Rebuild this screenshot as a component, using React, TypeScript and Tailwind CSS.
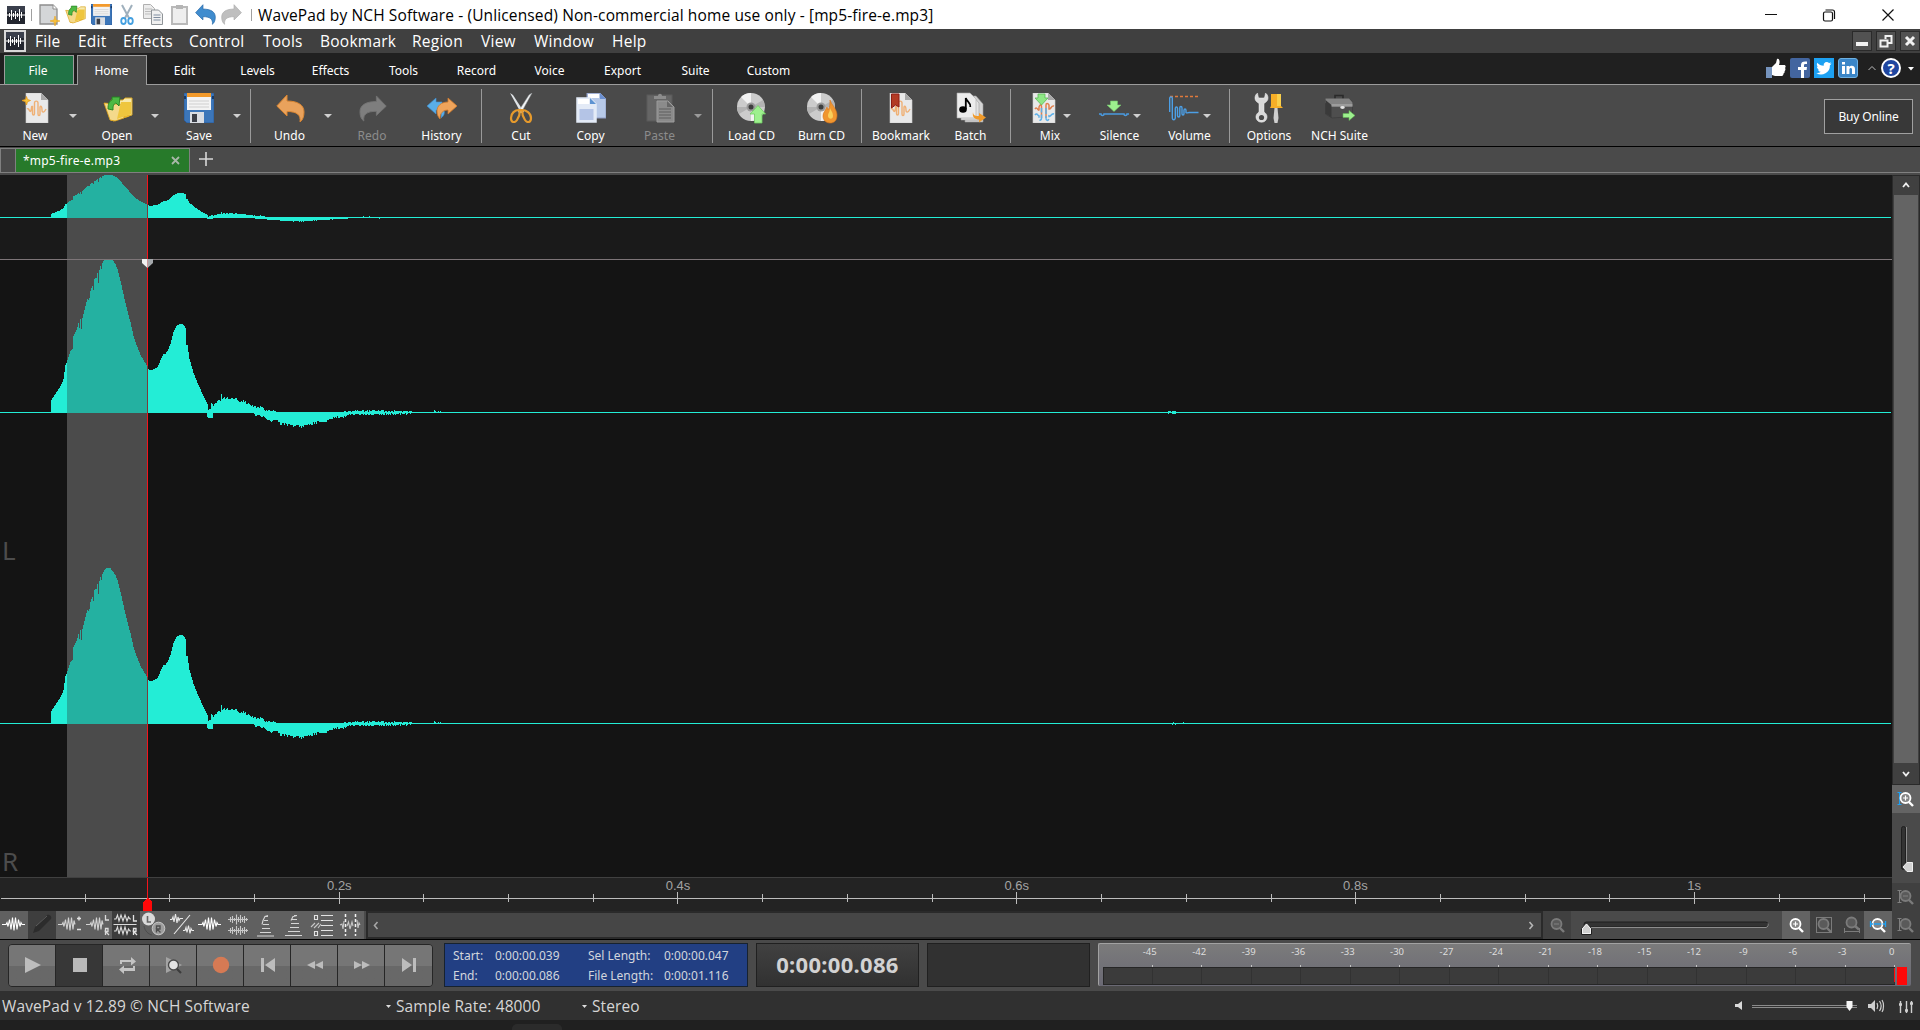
import React from "react";

/* ---------- waveform ---------- */

type Pt = [number, number];

const UPPER: Pt[] = [
  [51, 12], [55, 18], [60, 25.5], [63, 32.5], [64, 40], [65, 47], [66, 48.5], [67, 51.5], [70, 60.5], [72, 63], [73, 76],
  [76, 81.5], [78, 89], [79, 84], [80, 93], [81, 83], [82, 94], [85, 106], [87, 113], [88, 112], [89, 114], [90, 121], [92, 126],
  [93, 122], [94, 133], [96, 134], [97, 139], [98, 129], [99, 142], [100, 146], [101, 143], [102, 149], [104, 153],
  [106, 154.5], [110, 154.5], [112, 152], [115, 147.5], [117, 143], [120, 131], [123, 117.5], [126, 105], [130, 89.5],
  [133, 76], [136, 67], [140, 57], [144, 50], [147, 46], [148, 43], [149, 41.5], [152, 42], [157, 45], [160, 51.5],
  [163, 58], [165, 58], [167, 61], [170, 68], [173, 79.5], [176, 86], [179, 88], [182, 88], [184, 86],
  [185, 84], [186, 67], [187, 67], [189, 53], [193, 39], [198, 27], [203, 16], [207, 8], [208, 2], [210, 3], [211, 9],
  [213, 6], [218, 11], [222, 14], [230, 14], [238, 12], [243, 11], [248, 8], [253, 5], [262, 5], [264, 2], [274, 1.4], [276, 0], [340, 0],
  [352, 1.2], [380, 1.2], [411, 0.6], [412, 0], [433, 0], [434, 1], [440, 0.4], [445, 0],
];
const LOWER: Pt[] = [
  [206, 0], [207, 4], [209, 5], [212, 5], [213, 0], [253, 0], [254, 2], [262, 3], [268, 7], [278, 8], [280, 11],
  [290, 12], [300, 13.5], [307, 13], [313, 10], [325, 8.5], [331, 5], [344, 4], [349, 1.5], [410, 1], [411, 0], [445, 0],
];

const at = (pts: Pt[], x: number) => {
  if (x < pts[0][0] || x > pts[pts.length - 1][0]) return 0;
  for (let i = 1; i < pts.length; i++) {
    if (x <= pts[i][0]) {
      const [x0, y0] = pts[i - 1];
      const [x1, y1] = pts[i];
      return y0 + ((y1 - y0) * (x - x0)) / (x1 - x0 || 1);
    }
  }
  return 0;
};
const noise = (x: number) => {
  const s = Math.sin(x * 127.1) * 43758.5453;
  return s - Math.floor(s);
};

function wavePath(from: number, to: number, mid: number, scale: number, limit: number) {
  let d = "";
  for (let x = from; x < to; x++) {
    let u = at(UPPER, x);
    let l = at(LOWER, x);
    if (x > 212) {
      if (u > 0.3) u += (noise(x) - 0.5) * (u > 4 ? 3 : 1.6);
      if (l > 0.3) l += (noise(x + 900) - 0.5) * (l > 4 ? 3 : 1.6);
      if (x === 221) u += 4;
    }
    const trim = scale < 1 ? 0.1 : 0;
    const up = Math.max(0, Math.min(limit, Math.round(u * scale - trim)));
    const dn = Math.max(0, Math.round(l * scale - trim));
    if (up + dn > 0) d += `M${x} ${mid - up}h1v${up + dn + 1}h-1z`;
  }
  return d;
}

const Wave = ({ h, mid, scale, limit, blips }: { h: number; mid: number; scale: number; limit: number; blips?: string }) => (
  <svg width="1892" height={h} viewBox={`0 0 1892 ${h}`} shapeRendering="crispEdges" className="block">
    <rect x="67" width="80" height={h} fill="#4b4b4b" />
    <rect y={mid} width="1891" height="1" fill="#23edd6" />
    <path d={wavePath(51, 67, mid, scale, limit)} fill="#23edd6" />
    <rect x="67" y={mid} width="80" height="1" fill="#24b1a1" />
    <path d={wavePath(67, 148, mid, scale, limit)} fill="#24b1a1" />
    <path d={wavePath(148, 446, mid, scale, limit)} fill="#23edd6" />
    {blips && <path d={blips} fill="#23edd6" />}
    <rect x="147" width="1" height={h} fill="#f4141c" />
    <rect x="147" y={mid - Math.round(46 * scale)} width="1" height={Math.round(46 * scale) + 1} fill="#7d3a3a" />
  </svg>
);

/* ---------- small shared icons ---------- */

const AppIcon = () => (
  <svg width="18" height="18" viewBox="0 0 18 18" className="block shrink-0">
    <rect width="18" height="18" fill="#23262f" />
    <rect width="18" height="6" fill="#3a3f4c" />
    <path d="M0 9h18M2.5 7v4M4.5 4v10M6.5 7v4M8.5 5v8M10.500 7v4M12.500 3v12M14.500 6v6" stroke="#fff" strokeWidth="1" />
  </svg>
);

const Arrow = ({ c = "#d0d0d0" }: { c?: string }) => (
  <svg width="8" height="4" viewBox="0 0 8 4" className="block shrink-0"><path d="M0 0h8L4 4z" fill={c} /></svg>
);

const Floppy = ({ s }: { s: number }) => (
  <svg width={s} height={s} viewBox="0 0 30 30" className="block">
    <path d="M0 0h30v30H3l-3-3z" fill="#3c76b9" />
    <path d="M0 0h30v30H3l-3-3z" fill="none" stroke="#2b5c9b" />
    <rect x="3" y="1" width="24" height="16" fill="#f3f3f3" />
    <rect x="3" y="0" width="24" height="4" fill="#f39a2b" />
    <path d="M5 8h20M5 11h20M5 14h20" stroke="#cfcfcf" />
    <rect x="6" y="19" width="14" height="11" fill="#d9dde3" />
    <rect x="8" y="21" width="5" height="8" fill="#3b3f48" />
    <rect x="0" y="3" width="2" height="3" fill="#173a69" /><rect x="28" y="3" width="2" height="3" fill="#173a69" />
  </svg>
);

const OpenFolder = ({ w, h }: { w: number; h: number }) => (
  <svg width={w} height={h} viewBox="0 0 30 26" className="block">
    <path d="M8 4h12l2-2h7v17L10 25z" fill="#f7e9ae" stroke="#d9a824" />
    <path d="M1 7l3 0 3 17 21-6-3 3-17 4z" fill="#e9b52b" />
    <path d="M1 7l6 17 5 1 9-3V9z" fill="#f4d98b" stroke="#d9a018" strokeWidth=".8" />
    <path d="M18 6h10v12l-14 5z" fill="#efc63e" />
    <path d="M5 13c0-5 1-8 4-9V1l8 0-1 9-3-3c-3 1-3 4-3 7z" fill="#4cb944" stroke="#23801f" strokeWidth=".9" />
  </svg>
);

const UndoShape = ({ w, h, fill, stroke, flip }: { w: number; h: number; fill: string; stroke: string; flip?: boolean }) => (
  <svg width={w} height={h} viewBox="0 0 29 29" preserveAspectRatio="none" className={flip ? "block -scale-x-100" : "block"}>
    <path d="M.8 12L11 1v6c11 0 17 4 17 11 0 4-1 8-4 10 1-7-3-10.500-13-10.500V22z" fill={fill} stroke={stroke} strokeWidth="1" />
  </svg>
);

const Doc = ({ children }: { children?: React.ReactNode }) => (
  <svg width="30" height="30" viewBox="0 0 30 30" className="block">
    <path d="M4 0h15l7 7v23H4z" fill="#e9e9e9" stroke="#cfcfcf" strokeWidth=".6" />
    <path d="M19 0v7h7z" fill="#a8a8a8" />
    {children}
  </svg>
);

const SquiggleOrange = () => (
  <path d="M5 16c2-2 3 5 4 1.500s0-4.500 1.500-4v7c0 2 2 2 2 0V10c0-2.500 3.500-2.500 3.500 0v11c0 2 2 2 2 0v-7c1-2 2 0 2 3s2 3 4-1" fill="none" stroke="#efb074" strokeWidth="1.400" />
);

const Star = () => (
  <path d="M4.500 3.500l1 3 3 1-3 1.200-1 3.300-1-3.300-3.500-1.200 3.500-1z" fill="#f7c53c" stroke="#e89a1c" strokeWidth=".8" />
);

const Disc = ({ children }: { children?: React.ReactNode }) => (
  <svg width="30" height="30" viewBox="0 0 30 30" className="block overflow-visible">
    <circle cx="14" cy="14" r="14" fill="#cccccc" />
    <path d="M14 14L4 4A14 14 0 0 1 14 0zM14 14l10 10a14 14 0 0 1-10 4z" fill="#f2f2f2" />
    <path d="M14 14L26 7a14 14 0 0 1 2 7zM14 14L2 21a14 14 0 0 1-2-7z" fill="#b3b3b3" />
    <circle cx="14" cy="14" r="4.500" fill="#9a9a9a" /><circle cx="14" cy="14" r="2.500" fill="#3e3e3e" />
    {children}
  </svg>
);

/* ---------- ribbon icons ---------- */

const icons: Record<string, React.ReactNode> = {
  New: <div className="pl-[3px]"><Doc><SquiggleOrange /><Star /></Doc></div>,
  Open: <div className="pl-px pt-[2px]"><OpenFolder w={30} h={26} /></div>,
  Save: <Floppy s={30} />,
  Undo: <div className="pl-[2px]"><UndoShape w={29} h={29} fill="#e9a25c" stroke="#d98531" /></div>,
  Redo: <div className="pl-[2px]"><UndoShape w={28} h={27} fill="#7e7e7e" stroke="#727272" flip /></div>,
  History: (
    <svg width="30" height="30" viewBox="0 0 30 30" className="block">
      <path d="M0 13l9-8v4h6v6l2 2c1 3 0 6-3 8 1-5-1-8-5-8v4z" fill="#5aaee8" stroke="#3f8fd0" strokeWidth=".6" />
      <path d="M30 13l-9-8v4c-7 0-11 4-11 9 0 3 1 6 3 8 0-6 3-9 8-9v4z" fill="#efa45b" stroke="#d17a2c" strokeWidth=".8" />
    </svg>
  ),
  Cut: (
    <svg width="30" height="30" viewBox="0 0 30 30" className="block">
      <path d="M4 0l3 2 11 17-3 1z" fill="#dfe3e6" /><path d="M26 0l-3 2-11 17 3 1z" fill="#f3f5f6" stroke="#9a9fa3" strokeWidth=".5" />
      <path d="M13 17c-4 0-8 3-8 8s4 5 6 2 3-6 3-10zM16 17c4 0 9 3 9 8s-4 5-6 2-3-6-3-10z" fill="none" stroke="#e69a2c" strokeWidth="2.200" />
    </svg>
  ),
  Copy: (
    <svg width="30" height="30" viewBox="0 0 30 30" className="block">
      <path d="M11 0h13l6 6v19H11z" fill="#b7c9e8" stroke="#8f9cc4" /><path d="M12 1h11v4H12z" fill="#fff" /><path d="M24 0v6h6z" fill="#6b8fcf" />
      <path d="M1 5h13l6 6v18H1z" fill="#e3eaf6" stroke="#e4ecf8" strokeWidth="1.500" /><path d="M2 6h11v5H2z" fill="#fff" /><path d="M14 5v6h6z" fill="#5d93d2" />
      <path d="M3.500 16h14v11h-14z" fill="#b4c4e6" />
    </svg>
  ),
  Paste: (
    <svg width="30" height="30" viewBox="0 0 30 30" className="block">
      <rect x="2" y="2" width="25" height="26" fill="#656565" stroke="#5a5a5a" /><path d="M9 6V3h4c0-3 4-3 4 0h4v3z" fill="#8c8c8c" />
      <path d="M12 8h11l6 6v15H12z" fill="#8b8b8b" stroke="#9c9c9c" /><path d="M22 8v6h6z" fill="#666" />
      <path d="M14 16h12M14 19h12M14 22h12M14 25h12" stroke="#5f5f5f" strokeWidth="1.200" />
    </svg>
  ),
  "Load CD": <Disc><path d="M21 12.500l7.500 8.500H25v9h-7.500v-9H13z" fill="#9df08e" stroke="#6fca62" strokeWidth=".8" /></Disc>,
  "Burn CD": (
    <Disc>
      <path d="M23 7c1 4 7 9 7 15s-3 8-7 8-7-3-7-7 3-6 4-9l1 3c2-3 2-6 2-10z" fill="#f0962f" stroke="#d9731b" strokeWidth=".6" />
      <path d="M23 15c1 3 3 4 3 8s-5 3-5 0 2-4 2-8z" fill="#f9cf5b" />
    </Disc>
  ),
  Bookmark: <Doc><SquiggleOrange /><path d="M5.500 1H13v13l-3.500-2-4 3z" fill="#b23a24" stroke="#8f1d15" /></Doc>,
  Batch: (
    <svg width="30" height="30" viewBox="0 0 30 30" className="block overflow-visible">
      <path d="M9 3h11l7 8v18H9z" fill="#d4d4d4" stroke="#9a9a9a" strokeWidth=".6" /><path d="M5 2h11l7 8v17H5z" fill="#e2e2e2" stroke="#9a9a9a" strokeWidth=".6" />
      <path d="M1 0h13l6 6v19H1z" fill="#ececec" stroke="#aaa" strokeWidth=".6" />
      <ellipse cx="7" cy="16.500" rx="3.800" ry="3.300" /><path d="M9.800 16V5c1 4 5 4 4.500 9" fill="none" stroke="#000" strokeWidth="1.800" />
      <path d="M17 19c0 4 3 4 6 4v-3l7 4.500-7 5v-3c-4 0-7-2-6-7.500z" fill="#f09a2a" />
    </svg>
  ),
  Mix: (
    <Doc>
      <path d="M6 16c2-3 3 2 4 1v-3c1-3 2.500-3 2.500 0v11M25 13c-3-1-3 4-5 3v-4c-1-2-3-2-3 0v13" fill="none" stroke="#e0804f" strokeWidth="1.500" />
      <path d="M6 22c2-3 3 1 4 1v3c1 2 2.500 1 2.500-1V15M25 21c-3-1-3 3-5 2v3c-1 2-3 2-3-1V15" fill="none" stroke="#5eb0e8" strokeWidth="1.500" strokeDasharray="7 2" />
      <path d="M9 1h7v4h3l-6.500 7L6 5h3z" fill="#8fe886" stroke="#5cb957" strokeWidth=".8" />
    </Doc>
  ),
  Silence: (
    <svg width="30" height="30" viewBox="0 0 30 30" className="block">
      <path d="M11.500 8h7v4h3.500l-7 6.500L8 12h3.500z" fill="#9df08e" stroke="#74c46b" strokeWidth=".6" />
      <path d="M0 21h2c0 2 3 2 3 0h20c0 2 3 2 3 0h2" fill="none" stroke="#4a9ae0" strokeWidth="1.500" />
    </svg>
  ),
  Volume: (
    <svg width="30" height="30" viewBox="0 0 30 30" className="block">
      <path d="M1 3.500h29" stroke="#e07a3c" strokeWidth="1.400" strokeDasharray="3 2" />
      <path d="M.7 19V5c0-1.500 2.600-1.500 2.600 0v19.500c0 3 3 3 3 0V15.500c0-2 2.200-2 2.200 0v7c0 2 2.300 2 2.300 0v-7.500c0-2 2.200-2 2.200 0v5.500c0 2 2 2 2 0v-3c0-2 2-2 2 0v2c1 1 1 0 3 0h9.500" fill="none" stroke="#4c9fe6" strokeWidth="1.400" />
    </svg>
  ),
  Options: (
    <svg width="30" height="30" viewBox="0 0 30 30" className="block">
      <path d="M3.500 0C4 2 4 5 5.500 5h4C11 5 11 2 11.500 0c3 2 3.500 7 .5 9l-2 1.500V19c3 2 4 5 2 8-2 3-7 3-9 0s-1-6 2-8v-8.500L3 9C0 7 .5 2 3.500 0z" fill="#dadada" stroke="#f3f3f3" strokeWidth=".5" />
      <circle cx="7.500" cy="24.500" r="2.600" fill="#4a4a4a" />
      <path d="M17 1h10v12l2 2H16l1-2z" fill="#f6ae27" /><path d="M23 1h4v12h-4z" fill="#f9cf4b" />
      <path d="M20.500 15h3l1 10-1 5h-3l-1-5z" fill="#cfcfcf" />
    </svg>
  ),
  "NCH Suite": (
    <svg width="30" height="30" viewBox="0 0 30 30" className="block">
      <path d="M10 6V2.500h8V6" fill="none" stroke="#2a2a2a" strokeWidth="1.600" />
      <path d="M.5 6H24l3.500 3v14.500L7 25l-6.500-4z" fill="#4e4e4e" stroke="#3b3b3b" strokeWidth=".7" /><path d="M.5 5.500H24l3.500 4V14H6.500l-6-4z" fill="#838383" /><path d="M.5 7l6 5v12.500l-6-4z" fill="#3a3a3a" /><path d="M6.500 12h21" stroke="#b5b5b5" />
      <ellipse cx="17.500" cy="14.500" rx="2.300" ry="1.400" fill="#e4e4e4" />
      <path d="M18 20.500h6v-3l6 5-6 5v-3h-6z" fill="#9df08e" stroke="#62b356" strokeWidth=".6" />
    </svg>
  ),
};

type Item = { t: string; box: string; dim?: boolean; side?: boolean; inner?: boolean };
const groups: Item[][] = [
  [{ t: "New", box: "w-[68px]", side: true }, { t: "Open", box: "w-[68px]", side: true }, { t: "Save", box: "w-[68px]", side: true }],
  [{ t: "Undo", box: "w-[69px]", side: true }, { t: "Redo", box: "w-[68px]", dim: true }, { t: "History", box: "w-[71px]" }],
  [{ t: "Cut", box: "w-[70px]" }, { t: "Copy", box: "w-[69px]" }, { t: "Paste", box: "w-[69px]", dim: true, side: true }],
  [{ t: "Load CD", box: "w-[69px]" }, { t: "Burn CD", box: "w-[71px]" }],
  [{ t: "Bookmark", box: "w-[70px]" }, { t: "Batch", box: "w-[69px]" }],
  [{ t: "Mix", box: "w-[70px]", inner: true }, { t: "Silence", box: "w-[69px]", inner: true }, { t: "Volume", box: "w-[71px]", inner: true }],
  [{ t: "Options", box: "w-[70px]" }, { t: "NCH Suite", box: "w-[71px]" }],
];
const groupWidth = ["w-[250px]", "w-[230px]", "w-[230px]", "w-[148px]", "w-[148px]", "w-[218px]", "w-[150px]"];
const groupPad = ["pl-px", "pl-1", "pl-1", "pl-1", "pl-1", "pl-1", "pl-1"];

const RibbonItem = ({ it, last }: { it: Item; last: boolean }) => (
  <>
    <div className={`${it.box} flex shrink-0 flex-col items-center pt-[8px]`}>
      <div className={it.inner ? "flex h-[30px] items-start gap-[4px]" : "flex h-[30px] items-center"}>
        {icons[it.t]}
        {it.inner && <div className="pt-[21px]"><Arrow /></div>}
      </div>
      <div className={it.dim ? "mt-[4px] whitespace-nowrap text-[12px] leading-[17px] text-[#8c8c8c]" : "mt-[4px] whitespace-nowrap text-[12px] leading-[17px] text-white"}>{it.t}</div>
    </div>
    {it.side && (
      <div className={last ? "w-[10px] shrink-0 pt-[29px]" : "w-[14px] shrink-0 pt-[29px]"}><Arrow c={it.dim ? "#9a9a9a" : "#d0d0d0"} /></div>
    )}
  </>
);

/* ---------- edit toolbar icons ---------- */

const G = ({ d, c = "#d8d8d8", children }: { d: string; c?: string; children?: React.ReactNode }) => (
  <svg width="28" height="28" viewBox="0 0 28 28" className="block"><path d={d} fill="none" stroke={c} strokeWidth="1.100" />{children}</svg>
);
const fullWave = "M2 13.500h4l1-2 1 4 1.500-7 1.500 10 1.500-12 1.500 13 1.500-13 1.500 12 1.500-10 1.500 7 1-4 1 2h3";
const shortWave = "M2 13.500h4l1-2 1 4 1.500-7 1.500 10 1.500-12 1.500 13 1.500-13 1.500 12 1-9 1 4";
const toolIcons: React.ReactNode[] = [
  <G d={fullWave} c="#fff" />,
  <G d=""><path d="M5 22l2-6L19 4c3-1 5 2 4 4L11 20z" fill="#2c2c2c" /><path d="M8 15L19 5" stroke="#5c5c5c" /></G>,
  <G d={shortWave} c="#d2d2d2"><path d="M21 7.500h4M23 5.500v4M21 18.500h4" stroke="#e0e0e0" strokeWidth="1.400" /></G>,
  <G d={shortWave} c="#d2d2d2"><path d="M21.500 4v5h3.500M21.500 24v-6.500h2.500v3h-2.500l3.500 3.500" fill="none" stroke="#dadada" strokeWidth="1.300" /></G>,
  <G d="M2 8h2l1.500-4 1.500 6 2-6 2 6 2-6 2 6 1.500-4L18 8h1M2 20h2l1.500-4 1.500 7 2-7 2 7 2-7 2 7 1.500-5 1.500 2h1M1.500 13.500h23" c="#dcdcdc"><path d="M21.500 4v6h3.500M21.500 24v-6.500h2.500v3h-2.500l3.500 3.500" fill="none" stroke="#e2e2e2" strokeWidth="1.300" /></G>,
  <svg width="28" height="28" viewBox="0 0 28 28" className="block">
    <path d="M4 15c1 5 4 8 8 9" fill="none" stroke="#4d4d4d" /><circle cx="8.500" cy="8" r="6.500" fill="#d9d9d9" /><circle cx="18.500" cy="17.500" r="6.300" fill="#9d9d9d" stroke="#c8c8c8" />
    <path d="M7.500 5v6h3.500" fill="none" stroke="#666" strokeWidth="1.600" /><path d="M16.500 21.500V15H20v3h-3l3.500 3.500" fill="none" stroke="#4e4e4e" strokeWidth="1.400" />
  </svg>,
  <G d="M6 23L22 4M2 8.500h2l1-2.500 1 5 1.500-8 1.500 9 1-6 1 3.500 1-2h3M15 19.500h2l1-3 1 5 1.500-7 1.500 8 1-5 1 2h2" c="#e9e9e9" />,
  <G d={fullWave} c="#fff" />,
  <G d="M4 8.500h20M6.500 6v5M8.500 5v7M10.500 7v3M12.500 3.500v10M14.500 6v5M16.500 4v8M18.500 6v5M20.500 5v7M22.500 7v3M4 19.500h20M6.500 17v5M8.500 16v7M10.500 18v3M12.500 15v9M14.500 17v5M16.500 15v9M18.500 17v5M20.500 16v7M22.500 18v3" c="#c8c8c8" />,
  <G d="M13 5.500h3M12 9.500h4M11 13.500h6M10 17.500h8M8 21.500h11M5 25h17M16 4.500l-3 1-2 4-1 4" c="#d6d6d6" />,
  <G d="M14 4.500h3M12 8.500h5M11 12.500h8M10 16.500h9M8 20.500h12M5 24.500h17M17 4.500l-4 1-2 4" c="#d6d6d6" />,
  <G d="M6.500 4.500h3v4h-3zM6.500 20.500h3v4h-3zM13 4.500h12M13 9.500h12M13 14.500h12M13 19.500h12M13 24.500h12" c="#e2e2e2"><path d="M3 16l4-4M6 17l5-5M10 17l3-4" stroke="#c8c8c8" strokeWidth="1.100" /></G>,
  <G d="M4 14l2-1 1 5 1-8M11 15l1.500-4 1.500 7 2-7 1 4M21 9l1 8 1-5 1 2" c="#c6c6c6"><path d="M9.500 3v22M19.500 3v22" stroke="#f4f4f4" strokeWidth="1.500" strokeDasharray="3 2" /></G>,
];

const Mag = ({ c, sign, extra, accent = "#808080" }: { c: string; sign?: "+" | "-"; extra?: "box" | "under" | "h" | "v" | "vl"; accent?: string }) => (
  <svg width="28" height="28" viewBox="0 0 28 28" className="block">
    {extra === "box" && <rect x="6.500" y="6.500" width="15" height="15" fill="none" stroke={c} />}
    {extra === "under" && <path d="M6.500 17v5M21.500 17v5M7 20.500h14" stroke={c} fill="none" />}
    {(extra === "v" || extra === "vl") && <path d="M7.500 8v12M5.500 7.500h4M5.500 19.500h4" stroke={accent} fill="none" />}
    <circle cx="13.500" cy={extra === "under" ? 11.500 : 13} r="5" fill={c === "#fff" ? "#858585" : "#5a5a5a"} stroke={c} strokeWidth="1.800" />
    <path d={extra === "under" ? "M17 15l4 3.500" : "M17 17l4 4"} stroke={c} strokeWidth="2.400" />
    {sign && <path d={sign === "+" ? "M11 13h5M13.500 10.500v5" : "M11 13h5"} stroke={c} strokeWidth="1.200" />}
    {extra === "h" && <path d="M6 13h3M18.500 13h3M6.500 10v6M21.500 10v6M10 13h7" stroke="#1fa0f2" strokeWidth="1.300" />}
  </svg>
);

/* ---------- transport ---------- */

const transport: React.ReactNode[] = [
  <path d="M16 13v16l16-8z" fill="#bdbdbd" />,
  <rect x="17" y="14" width="14" height="14" fill="#b9b9b9" />,
  <path d="M17 20v-4h11v-3l5 4.500-5 4V18H19v2zM32 22v5H21v3l-5-4.500 5-4V24h9v-2z" fill="#c4c4c4" />,
  <g><path d="M16 13v16l16-8z" fill="#a4a4a4" /><circle cx="23.500" cy="21" r="5" fill="#e2e2e2" stroke="#4a4a4a" strokeWidth="1.400" /><path d="M27 25l4 4" stroke="#3c3c3c" strokeWidth="2.200" /></g>,
  <circle cx="24" cy="21" r="8.200" fill="#d67a54" />,
  <path d="M17 14h3v14h-3zM31 14v14l-10-7z" fill="#bcbcbc" />,
  <path d="M24 17v8l-8-4zM32 17v8l-8-4z" fill="#bcbcbc" />,
  <path d="M16 17v8l8-4zM24 17v8l8-4z" fill="#bcbcbc" />,
  <path d="M17 14v14l10-7zM28 14h3v14h-3z" fill="#bcbcbc" />,
];

const menu: [string, string][] = [
  ["File", "w-[43px]"], ["Edit", "w-[45px]"], ["Effects", "w-[66px]"], ["Control", "w-[74px]"], ["Tools", "w-[57px]"],
  ["Bookmark", "w-[92px]"], ["Region", "w-[69px]"], ["View", "w-[53px]"], ["Window", "w-[78px]"], ["Help", "w-[60px]"],
];
const tabs = ["Edit", "Levels", "Effects", "Tools", "Record", "Voice", "Export", "Suite", "Custom"];
const meter = ["-45", "-42", "-39", "-36", "-33", "-30", "-27", "-24", "-21", "-18", "-15", "-12", "-9", "-6", "-3", "0"];

function TitleBar() {
  return (
    <div className="flex h-[29px] shrink-0 items-center bg-white pl-[7px]">
      <AppIcon />
      <div className="ml-[6px] h-[12px] w-px bg-[#a0a0a0]" />
      <div className="flex items-center">
        <div className="ml-[4px] flex h-[26px] w-[26px] items-center justify-center">
          <svg width="22" height="22" viewBox="0 0 22 22"><path d="M2 1h13l4 4v15H2z" fill="#d4d6d8" stroke="#8d8d8d" strokeWidth="1.300" /><path d="M15 1v4h4" fill="#fff" stroke="#8d8d8d" /><path d="M17 12l1 4 4 1-4 1-1 4-1-4-4-1 4-1z" fill="#f8c23a" stroke="#e9a520" strokeWidth=".6" /></svg>
        </div>
        <div className="flex h-[26px] w-[26px] items-center justify-center"><OpenFolder w={21} h={19} /></div>
        <div className="flex h-[26px] w-[26px] items-center justify-center"><Floppy s={21} /></div>
        <div className="flex h-[26px] w-[26px] items-center justify-center">
          <svg width="16" height="22" viewBox="0 0 16 22"><path d="M3 1l7 13M13 1L6 14" stroke="#9fb0bd" strokeWidth="2" /><ellipse cx="4.500" cy="17" rx="2.300" ry="3" fill="none" stroke="#45a0e0" strokeWidth="1.800" /><ellipse cx="11.500" cy="17" rx="2.300" ry="3" fill="none" stroke="#45a0e0" strokeWidth="1.800" /></svg>
        </div>
        <div className="flex h-[26px] w-[26px] items-center justify-center">
          <svg width="20" height="21" viewBox="0 0 20 21"><path d="M.5.5h7l4 4v10H.5z" fill="#ececec" stroke="#b0b0b0" /><path d="M2 5h7M2 7.500h7M2 10h7" stroke="#bdbdbd" /><path d="M8.500 6h7l4 4v10.500h-11z" fill="#f0f0f0" stroke="#8f9498" /><path d="M10.500 11h7M10.500 13.500h7M10.500 16h7" stroke="#7f8da0" /></svg>
        </div>
        <div className="flex h-[26px] w-[26px] items-center justify-center">
          <svg width="17" height="20" viewBox="0 0 17 20"><rect x="1" y="2" width="15" height="17" fill="#eee" stroke="#b9b9b9" strokeWidth="2" /><rect x="5" y="0" width="7" height="4" fill="#b5b5b5" /></svg>
        </div>
        <div className="flex h-[26px] w-[26px] items-center justify-center"><UndoShape w={21} h={21} fill="#3f8cce" stroke="#2c6cab" /></div>
        <div className="flex h-[26px] w-[26px] items-center justify-center"><UndoShape w={21} h={21} fill="#bfbfbf" stroke="#b0b0b0" flip /></div>
      </div>
      <div className="ml-[7px] h-[12px] w-px bg-[#a0a0a0]" />
      <div className="ml-[6px] whitespace-nowrap pt-[2px] font-['Open_Sans','Noto_Sans',sans-serif] text-[15.500px] tracking-[0.125px] text-black">WavePad by NCH Software - (Unlicensed) Non-commercial home use only - [mp5-fire-e.mp3]</div>
      <svg width="130" height="14" viewBox="0 0 130 14" className="ml-auto mr-[26px] block" fill="none" stroke="#111" strokeWidth="1.200">
        <path d="M1 6.500h12M118.500 1.500l11 11M129.500 1.500l-11 11" />
        <rect x="59.500" y="4" width="9" height="9" rx="1.500" /><path d="M61.500 2h7a2 2 0 0 1 2 2v7" />
      </svg>
    </div>
  );
}

const mdiPaths = ["M4 13h12", "M9.500 8V5h6v7h-3M4.500 9.500h7v6h-7z", "M6 6l8 8M14 6l-8 8"];

export default function App() {
  return (
    <div className="flex h-[1030px] w-[1920px] flex-col overflow-hidden bg-[#202020] font-['Noto_Sans','Open_Sans',sans-serif]">
      <TitleBar />

      {/* menu */}
      <div className="flex h-[24px] shrink-0 items-center bg-[#404040] pl-[4px] font-['Open_Sans','Noto_Sans',sans-serif] text-[15.500px] text-white">
        <div className="mr-[9px] flex h-[22px] w-[22px] items-center justify-center border-2 border-[#d8d8d8] bg-[#23262f]"><AppIcon /></div>
        {menu.map(([m, w]) => <div key={m} className={`${w} -mt-px shrink-0 leading-[22px] tracking-[0.25px]`}>{m}</div>)}
        <div className="ml-auto flex gap-[4px]">
          {mdiPaths.map((d, i) => (
            <div key={i} className="h-[20px] w-[20px] border border-[#2a2a2a] bg-[#525252]">
              <svg width="18" height="18" viewBox="1 1 18 18" className="block"><path d={d} fill="none" stroke="#f2f2f2" strokeWidth={i === 0 ? 4 : i === 1 ? 2 : 3} /></svg>
            </div>
          ))}
        </div>
      </div>

      {/* ribbon tabs */}
      <div className="flex h-[32px] shrink-0 items-end border-b border-[#9c9c9c] bg-[#202020] pl-[4px] text-[12px] text-white">
        <div className="flex h-[29px] w-[70px] items-center justify-center border border-b-0 border-[#9c9c9c] bg-[#207245] pr-[2px] pt-px">File</div>
        <div className="-mb-px ml-[3px] flex h-[30px] w-[70px] items-center justify-center border border-b-0 border-[#9c9c9c] bg-[#4a4a4a] pr-px">Home</div>
        <div className="ml-[1px] flex h-[29px] items-center pt-[2px]">
          {tabs.map((t) => <div key={t} className="w-[73px] text-center">{t}</div>)}
        </div>
        <div className="ml-auto flex h-[26px] items-start gap-[4px] pr-[6px]">
          <svg width="20" height="20" viewBox="0 0 20 20"><rect y="9" width="6" height="11" fill="#7593bd" /><path d="M6 9l4-4 1-4c3-1 3 4 2 6h5c2 0 2 2 1 3 1 1 0 3-.5 3 .5 1 0 2.500-1 2.500 0 2-1 2.500-2.500 2.500H9l-3-1z" fill="#fff" /></svg>
          <svg width="20" height="20" viewBox="0 0 20 20"><rect width="20" height="20" rx="2" fill="#43659f" /><path d="M11 20v-8H8V9h3V7c0-3 2-4 6-3.500V6c-2-.3-3 0-3 1.300V9h3l-.4 3H14v8z" fill="#fff" /></svg>
          <svg width="20" height="20" viewBox="0 0 20 20"><rect width="20" height="20" fill="#1da1f2" /><path d="M17.500 5.500c-.6.300-1.200.4-1.800.5.600-.4 1-1 1.300-1.700-.6.300-1.300.6-2 .7a3.100 3.100 0 0 0-5.300 2.800C7.100 7.700 4.900 6.500 3.300 4.700c-.9 1.500-.4 3.300 1 4.200-.5 0-1-.2-1.400-.4 0 1.500 1 2.800 2.500 3.100-.5.100-.9.100-1.400.1.400 1.200 1.500 2.100 2.900 2.100A6.300 6.300 0 0 1 2.300 15a8.800 8.800 0 0 0 13.600-7.800c.6-.5 1.200-1 1.600-1.700z" fill="#fff" /></svg>
          <svg width="20" height="20" viewBox="0 0 20 20"><rect x=".5" y=".5" width="19" height="19" rx="2.500" fill="#3a86c8" stroke="#6db0e2" /><path d="M4 8h3v8H4zM4 4h3v2.600H4zM8.500 8h2.800v1.100C12.500 7 17 7.200 17 11v5h-3v-4.500c0-2-2.600-2-2.600 0V16H8.500z" fill="#fff" /></svg>
          <svg width="11" height="20" viewBox="0 0 11 20" className="ml-[4px]"><path d="M2.500 12L6 8.500 9.500 12" fill="none" stroke="#bbb" /></svg>
          <div className="flex h-[20px] w-[20px] items-center justify-center rounded-full border-2 border-white bg-[#1f46a0] text-[15px] font-bold leading-none">?</div>
          <svg width="6" height="20" viewBox="0 0 6 20" className="ml-[3px]"><path d="M0 9h6l-3 3.500z" fill="#fff" /></svg>
        </div>
      </div>

      {/* ribbon */}
      <div className="flex h-[61px] shrink-0 bg-[#4a4a4a]">
        {groups.map((g, gi) => (
          <React.Fragment key={gi}>
            <div className={`${groupWidth[gi]} ${groupPad[gi]} flex shrink-0`}>
              {g.map((it, i) => <RibbonItem key={it.t} it={it} last={i === g.length - 1} />)}
            </div>
            {gi < groups.length - 1 && <div className="mt-[4px] h-[54px] w-px shrink-0 bg-[#9a9a9a]" />}
          </React.Fragment>
        ))}
        <div className="ml-auto mr-[7px] mt-[14px] flex h-[35px] w-[89px] items-center justify-center whitespace-nowrap border border-[#a0a0a0] bg-[#383838] text-[12px] tracking-[-0.15px] text-white">Buy Online</div>
      </div>

      {/* file tabs */}
      <div className="flex h-[29px] shrink-0 flex-col border-t border-black bg-[#4a4a4a]">
        <div className="flex h-[26px] border-b border-[#808080] pt-px">
          <div className="w-[15px] border-l border-t border-[#808080]" />
          <div className="flex w-[175px] items-center border border-b-0 border-[#808080] bg-[#277a2a] pl-[7px] text-[12px] tracking-[0.22px] text-white">
            *mp5-fire-e.mp3
            <svg width="9" height="9" viewBox="0 0 9 9" className="ml-auto mr-[9px]"><path d="M1 1l7 7M8 1L1 8" stroke="#a9b8a9" strokeWidth="1.800" /></svg>
          </div>
          <svg width="14" height="14" viewBox="0 0 14 14" className="ml-[9px] mt-[4px]"><path d="M0 7h14M7 0v14" stroke="#d8d8d8" strokeWidth="1.600" /></svg>
        </div>
      </div>

      {/* editor */}
      <div className="flex h-[764px] shrink-0">
        <div className="flex w-[1892px] flex-col">
          <div className="h-[84px] bg-[#1a1a1a]"><Wave h={84} mid={42} scale={0.274} limit={42} blips="M363 41h1v1h-1zM369 41h1v1h-1zM379 43h1v1h-1z" /></div>
          <div className="relative z-10 h-px bg-[#7d7578]">
            <svg width="11" height="9" viewBox="0 0 11 9" className="absolute left-[142px] top-0"><path d="M0 0h5.500v9L0 4z" fill="#f2f2f2" /><path d="M5.500 0H11v4L5.500 9z" fill="#a5a9ac" /></svg>
          </div>
          <div className="relative h-[306px] bg-[#141414]">
            <Wave h={306} mid={152} scale={1} limit={152} blips="M1168 151h3v1h-3zM1168 153h1v1h-1zM1172 151h4v3h-4z" />
            <div className="absolute bottom-0 left-[2px] text-[26px] leading-[32px] text-[#4c4c4c]">L</div>
          </div>
          <div className="relative h-[311px] bg-[#141414]">
            <Wave h={311} mid={157} scale={1} limit={155} blips="M1172 158h1v1h-1zM1173 156h1v1h-1zM1175 158h1v1h-1zM1183 156h1v1h-1z" />
            <div className="absolute bottom-0 left-[2px] text-[26px] leading-[32px] text-[#4c4c4c]">R</div>
          </div>
          {/* time ruler */}
          <div className="relative h-[34px] border-t border-[#404040] bg-[#232323]">
            <svg width="1892" height="33" viewBox="0 878 1892 33" shapeRendering="crispEdges" className="block">
              <rect x="1" y="898" width="1890" height="1" fill="#bdbdbd" />
              {Array.from({ length: 22 }, (_, i) => {
                const x = Math.floor((i + 1) * 84.72 + 0.2);
                const major = (i + 1) % 4 === 0;
                return <rect key={i} x={i === 0 ? 85 : x} y={major ? 892 : 894} width="1" height={major ? 12 : 8} fill="#bdbdbd" />;
              })}
              <rect x="147" y="878" width="1" height="21" fill="#f4141c" />
              <path d="M143 911v-9l4-4h1l4 4v9z" fill="#ff0808" />
            </svg>
            <div className="absolute inset-x-0 top-0 flex pl-[170px] font-['Liberation_Sans',Arial,sans-serif] text-[13px] leading-[16px] text-[#a3a3a3]">
              {["0.2s", "0.4s", "0.6s", "0.8s", "1s"].map((t) => <div key={t} className="w-[338.7px] shrink-0 text-center">{t}</div>)}
            </div>
          </div>
          {/* edit toolbar */}
          <div className="flex h-[28px] bg-[#4a4a4a]">
            {toolIcons.map((ic, i) => (
              <div key={i} className={i === 1 ? "w-[28px] bg-[#3e3e3e]" : i === 4 ? "w-[28px] bg-[#3c3c3c]" : "w-[28px] bg-[#606060]"}>{ic}</div>
            ))}
            <div className="ml-[2px] flex w-[1177px] items-center justify-between border-2 border-[#2a2a2a] bg-[#464646] px-[5px]">
              <svg width="6" height="9" viewBox="0 0 6 9"><path d="M4.500 1L1.500 4.500l3 3.500" fill="none" stroke="#a6a6a6" strokeWidth="1.600" /></svg>
              <svg width="6" height="9" viewBox="0 0 6 9" className="mr-[2px]"><path d="M1.500 1l3 3.500-3 3.500" fill="none" stroke="#b6b6b6" strokeWidth="1.600" /></svg>
            </div>
            <div className="w-[28px] bg-[#404040]"><Mag c="#7b7b7b" sign="-" /></div>
            <div className="w-[211px]">
              <svg width="211" height="28" viewBox="0 0 211 28" className="block">
                <rect x="13" y="11" width="184" height="5" rx="2.500" fill="#333" stroke="#1f1f1f" /><path d="M14 16.500h181a3 3 0 0 0 2-4" fill="none" stroke="#8d8d8d" />
                <path d="M10.500 23.500v-6l5-5.500 5 5.500v6z" fill="#d4d4d4" stroke="#1e1e1e" /><path d="M11.500 22.500v-5l4-4.500 4 4.500v5z" fill="#cfcfcf" stroke="#f3f3f3" />
              </svg>
            </div>
            <div className="w-[28px] bg-[#636363]"><Mag c="#fff" sign="+" /></div>
            <div className="w-[28px] bg-[#404040]"><Mag c="#7b7b7b" extra="box" /></div>
            <div className="w-[26px] overflow-hidden bg-[#404040]"><Mag c="#7b7b7b" extra="under" /></div>
            <div className="w-[28px] bg-[#636363]"><Mag c="#fff" extra="h" /></div>
          </div>
        </div>

        {/* vertical scroll and zoom */}
        <div className="flex w-[28px] flex-col bg-[#4a4a4a]">
          <div className="flex h-[610px] flex-col border border-[#2a2a2a] bg-[#404040]">
            <div className="flex h-[19px] items-center justify-center pb-px"><svg width="8" height="6" viewBox="0 0 8 6"><path d="M1 5l3-3.500L7 5" fill="none" stroke="#f0f0f0" strokeWidth="1.800" /></svg></div>
            <div className="mx-px flex-1 bg-[#646464]" />
            <div className="flex h-[21px] items-center justify-center"><svg width="8" height="6" viewBox="0 0 8 6"><path d="M1 1l3 3.500L7 1" fill="none" stroke="#f0f0f0" strokeWidth="1.800" /></svg></div>
          </div>
          <div className="h-[28px] bg-[#646464]"><Mag c="#fff" sign="+" extra="v" accent="#1fa0f2" /></div>
          <div className="h-[70px]">
            <svg width="28" height="70" viewBox="0 0 28 70" className="block">
              <rect x="9.500" y="13.500" width="4" height="43" rx="2" fill="#333" stroke="#1f1f1f" /><path d="M14.500 14v38" stroke="#8d8d8d" />
              <path d="M11 54l4-4.500h5.500v9H15z" fill="#d2d2d2" stroke="#f0f0f0" />
            </svg>
          </div>
          <div className="h-[28px] bg-[#404040]"><Mag c="#7b7b7b" sign="-" extra="v" /></div>
          <div className="h-[28px] bg-[#404040]"><Mag c="#7b7b7b" extra="vl" /></div>
        </div>
      </div>

      {/* transport bar */}
      <div className="flex h-[52px] shrink-0 border-t border-black bg-[#4a4a4a]">
        <div className="ml-[8px] mt-[4px] flex h-[43px] overflow-hidden rounded-[4px] border border-[#262626]">
          {transport.map((ic, i) => (
            <div key={i} className={i === 1 ? "w-[47px] border-r border-[#262626] bg-[#373737]" : i === 8 ? "w-[47px] bg-linear-to-b from-[#767676] from-50% to-[#686868] to-50%" : "w-[47px] border-r border-[#262626] bg-linear-to-b from-[#767676] from-50% to-[#686868] to-50%"}>
              <svg width="46" height="41" viewBox="0 1 46 41" className="block">{ic}</svg>
            </div>
          ))}
        </div>
        <div className="ml-[11px] mt-[3px] grid h-[44px] w-[304px] grid-cols-[42px_93px_76px_80px] content-center border border-[#17222f] bg-[#223f83] pl-[8px] pt-[2px] text-[12px] leading-[20px] text-[#d2d6dd]">
          <div>Start:</div><div>0:00:00.039</div><div>Sel Length:</div><div>0:00:00.047</div>
          <div>End:</div><div>0:00:00.086</div><div>File Length:</div><div>0:00:01.116</div>
        </div>
        <div className="ml-[8px] mt-[3px] flex h-[44px] w-[163px] items-center justify-center border border-[#202020] bg-linear-to-b from-[#414141] to-[#313131] pb-[2px] text-[22px] font-bold tracking-[0.3px] text-[#d2d2d2]">0:00:00.086</div>
        <div className="ml-[8px] mt-[3px] h-[44px] w-[163px] border border-[#202020] bg-[#313131]" />
        <div className="ml-[8px] mt-[3px] flex h-[43px] w-[813px] flex-col rounded-[2px] border-l border-t border-[#a2a2a2] bg-linear-to-b from-[#7b7b7b] to-[#6a6974]">
          <div className="flex h-[21px] pl-[26px] pt-px">
            {meter.map((m) => <div key={m} className="w-[49.48px] shrink-0 text-center text-[9.500px] leading-[13px] text-[#dedede]">{m}</div>)}
          </div>
          <div className="flex pl-[4px]">
            <svg width="806" height="20" viewBox="1103 963 806 20" shapeRendering="crispEdges" className="block">
              <rect x="1103" y="965" width="792" height="18" fill="#262626" /><rect x="1104" y="966" width="790" height="16" fill="#3b3b3b" />
              {meter.map((m, i) => (
                <g key={m}><rect x={Math.round(1152 + i * 49.48)} y="963" width="1" height="2" fill="#c4c4c4" /><rect x={Math.round(1152 + i * 49.48)} y="966" width="1" height="16" fill="#323232" /></g>
              ))}
              <rect x="1894" y="966" width="1" height="14" fill="#ff0808" /><rect x="1897" y="965" width="10" height="18" fill="#ff0808" />
            </svg>
          </div>
        </div>
      </div>

      {/* status bar */}
      <div className="flex h-[29px] shrink-0 items-center bg-[#303030] pt-[2px] font-['Open_Sans','Noto_Sans',sans-serif] text-[15.500px] tracking-[0.12px] text-[#d6d6d6]">
        <div className="w-[386px] whitespace-nowrap pl-[2px]">WavePad v 12.89 © NCH Software</div>
        <div className="flex w-[196px] items-center gap-[5px] whitespace-nowrap"><svg width="5" height="3" viewBox="0 0 5 3"><path d="M0 0h5L2.500 3z" fill="#ddd" /></svg>Sample Rate: 48000</div>
        <div className="flex items-center gap-[5px]"><svg width="5" height="3" viewBox="0 0 5 3"><path d="M0 0h5L2.500 3z" fill="#ddd" /></svg>Stereo</div>
        <svg width="185" height="18" viewBox="1730 996 185 18" className="-mt-[2px] ml-auto mr-[5px] block">
          <path d="M1735 1003h3l4-3v9l-4-3h-3z" fill="#d9d9d9" />
          <path d="M1752 1004.500h105M1752 1006.500h105" stroke="#8b8b8b" />
          <path d="M1846.500 1000h6v6l-3 4-3-4z" fill="#f5f5f5" />
          <path d="M1868 1003h3l4-4v12l-4-4h-3z" fill="#cfcfcf" /><path d="M1877 1002c1 2 1 4 0 6M1879.500 1000c2 3 2 7 0 10M1882 999c2 3 2 9 0 12" fill="none" stroke="#cfcfcf" strokeWidth="1.200" />
          <path d="M1900.500 1000v12M1906.500 1000v12M1911.500 1000v12" stroke="#d0d0d0" strokeWidth="1.400" /><path d="M1899 1003.500h3M1905 1009.500h3M1910 1002.500h3" stroke="#d0d0d0" strokeWidth="2.500" />
        </svg>
      </div>
      <div className="flex flex-1 items-end bg-[#202020] pl-[512px]"><div className="h-[6px] w-[50px] rounded-t-[5px] bg-[#2b2b2b]" /></div>
    </div>
  );
}
